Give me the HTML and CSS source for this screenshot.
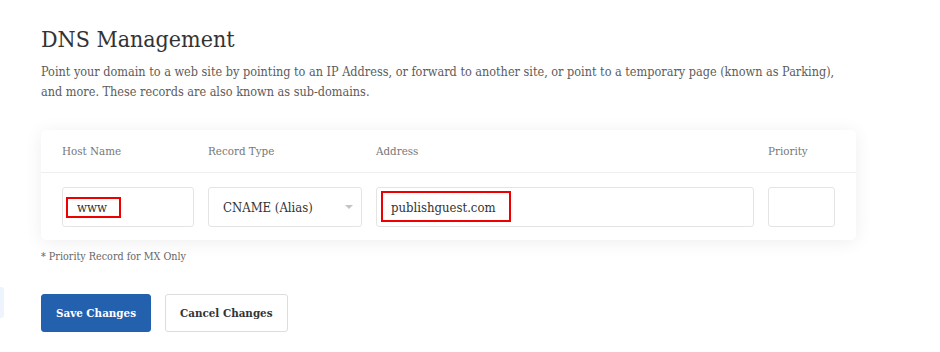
FILE: index.html
```html
<!DOCTYPE html>
<html lang="en">
<head>
	<meta charset="UTF-8" />
	<meta name="viewport" content="width=device-width, initial-scale=1.0" />
	<title>DNS Management</title>
	<link rel="stylesheet" href="styles.css">
</head>
<body>
<div class="side-tab"></div>
<div class="page">
	<h1>DNS Management</h1>
	<p class="intro">Point your domain to a web site by pointing to an IP Address, or forward to another site, or point to a temporary page (known as Parking), and more. These records are also known as sub-domains.</p>

	<div class="records">
		<div class="records-head">
			<span>Host Name</span>
			<span>Record Type</span>
			<span>Address</span>
			<span>Priority</span>
		</div>
		<div class="records-row">
			<div class="field">
				<span class="value">www</span>
				<span class="mark mark-host"></span>
			</div>
			<div class="field select">
				<span class="value">CNAME (Alias)</span>
				<span class="caret"></span>
			</div>
			<div class="field">
				<span class="value">publishguest.com</span>
				<span class="mark mark-addr"></span>
			</div>
			<div class="field"></div>
		</div>
	</div>

	<p class="note">* Priority Record for MX Only</p>

	<div class="actions">
		<button class="btn btn-primary">Save Changes</button>
		<button class="btn">Cancel Changes</button>
	</div>
</div>
</body>
</html>
```

FILE: styles.css
```css
body {
	margin: 0;
	background: #fff;
	font-family: "DejaVu Serif", serif;
	font-stretch: condensed;
	color: #333;
}
.side-tab {
	position: absolute;
	left: 0;
	top: 287px;
	width: 4px;
	height: 31px;
	background: #eef4fd;
	border-radius: 0 3px 3px 0;
}
.page {
	padding: 24px 41px 0;
}
h1 {
	margin: 0;
	font-size: 23px;
	font-weight: normal;
	line-height: 30px;
	color: #333;
}
.intro {
	margin: 8px 0 0;
	font-size: 12.55px;
	line-height: 20px;
	color: #5c5c5c;
	max-width: 800px;
}
.records {
	margin-top: 28px;
	width: 815px;
	background: #fff;
	border-radius: 5px;
	box-shadow: 0 2px 18px rgba(0, 0, 0, 0.07);
}
.records-head, .records-row {
	display: grid;
	grid-template-columns: 132px 154px 1fr 67px;
	column-gap: 14px;
	padding: 0 21px;
}
.records-head {
	height: 42px;
	align-items: center;
	border-bottom: 1px solid #eeeeee;
	font-size: 11.5px;
	color: #777;
}
.records-row {
	padding-top: 14px;
	padding-bottom: 13px;
}
.field {
	position: relative;
	height: 38px;
	border: 1px solid #e4e4e4;
	border-radius: 3px;
	display: flex;
	align-items: center;
	font-size: 13px;
	color: #333;
}
.value {
	padding-left: 14px;
}
.caret {
	position: absolute;
	right: 8px;
	top: 17px;
	border-left: 4px solid transparent;
	border-right: 4px solid transparent;
	border-top: 4px solid #c4c4c4;
}
.mark {
	position: absolute;
	border: 2px solid #ee0000;
	box-sizing: border-box;
}
.mark-host {
	left: 3px;
	top: 9px;
	width: 55px;
	height: 21px;
}
.mark-addr {
	left: 4px;
	top: 3px;
	width: 130px;
	height: 31px;
}
.note {
	margin: 10px 0 0;
	font-size: 10.7px;
	color: #666;
}
.actions {
	display: flex;
	gap: 14px;
	margin-top: 31px;
}
.btn {
	height: 38px;
	padding: 0 14px;
	border: 1px solid #dddddd;
	border-radius: 3px;
	background: #fff;
	color: #333;
	font-family: inherit;
	font-stretch: inherit;
	font-size: 11.5px;
	font-weight: bold;
}
.btn-primary {
	background: #2360ae;
	border-color: #2360ae;
	color: #fff;
}
```
